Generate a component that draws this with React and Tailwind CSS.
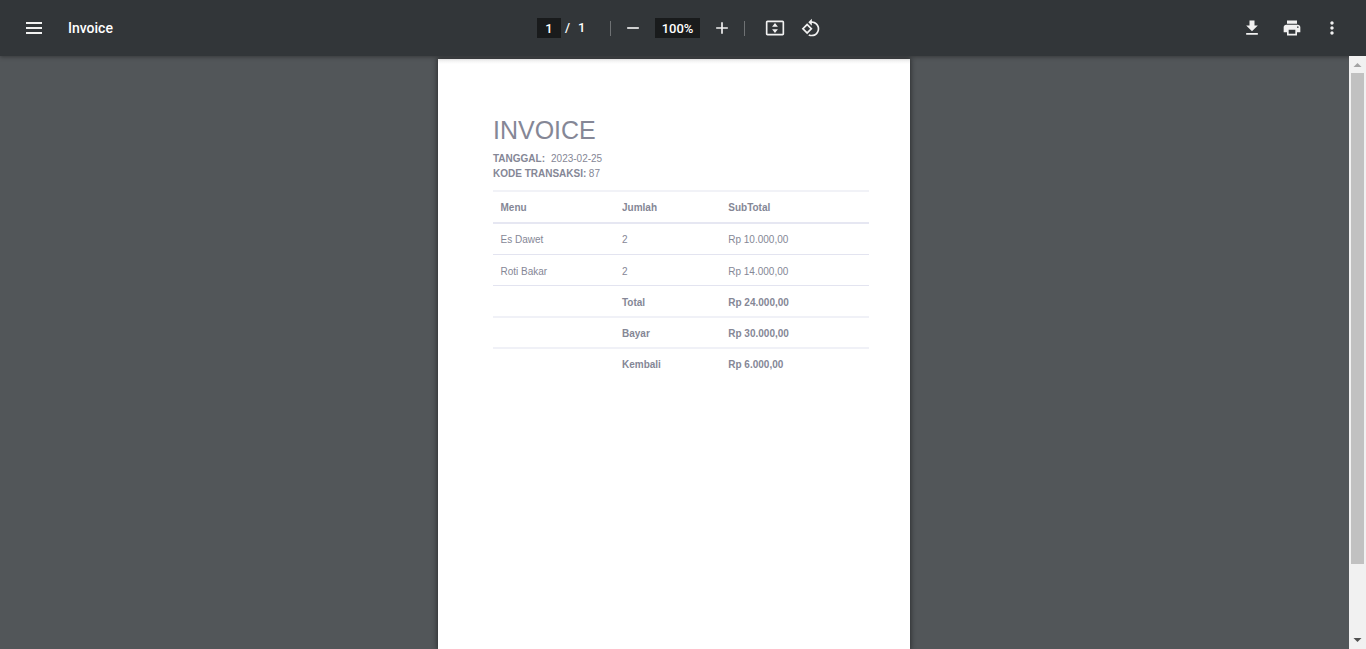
import React from 'react';

function Icon({ d, className = '' }) {
  return (
    <svg viewBox="0 0 24 24" className={`block h-5 w-5 shrink-0 fill-[#f1f1f1] ${className}`}>
      <path d={d} />
    </svg>
  );
}

const icons = {
  minus: 'M19 13H5v-2h14v2z',
  plus: 'M19 13h-6v6h-2v-6H5v-2h6V5h2v6h6v2z',
  fit: 'M21 3H3c-1.1 0-2 .9-2 2v14c0 1.1.9 2 2 2h18c1.1 0 2-.9 2-2V5c0-1.1-.9-2-2-2zm0 16.01H3V4.99h18v14.02zM12 6L8.5 10.4h7zM12 18l-3.5-4.4h7z',
  rotate:
    'M7.34 6.41L.86 12.9l6.49 6.48 6.49-6.48-6.5-6.49zM3.69 12.9l3.66-3.66L11 12.9l-3.66 3.66-3.65-3.66zm15.67-6.26C17.61 4.88 15.3 4 13 4V.76L8.76 5 13 9.24V6c1.79 0 3.58.68 4.95 2.05 2.73 2.73 2.73 7.17 0 9.9C16.58 19.32 14.79 20 13 20c-.97 0-1.94-.21-2.84-.61l-1.49 1.49C10.02 21.62 11.51 22 13 22c2.3 0 4.61-.88 6.36-2.64 3.52-3.51 3.52-9.21 0-12.72z',
  download: 'M19 9h-4V3H9v6H5l7 7 7-7zM5 18v2h14v-2H5z',
  print:
    'M19 8H5c-1.66 0-3 1.34-3 3v6h4v4h12v-4h4v-6c0-1.66-1.34-3-3-3zm-3 11H8v-5h8v5zm3-7c-.55 0-1-.45-1-1s.45-1 1-1 1 .45 1 1-.45 1-1 1zm-1-9H6v4h12V3z',
  more: 'M12 8c1.1 0 2-.9 2-2s-.9-2-2-2-2 .9-2 2 .9 2 2 2zm0 2c-1.1 0-2 .9-2 2s.9 2 2 2 2-.9 2-2-.9-2-2-2zm0 6c-1.1 0-2 .9-2 2s.9 2 2 2 2-.9 2-2-.9-2-2-2z',
};

function Toolbar() {
  return (
    <header className="relative z-10 grid h-14 shrink-0 grid-cols-[537px_1fr_124px] items-center bg-[#323639] font-[Roboto,sans-serif] text-white shadow-[0_1px_4px_rgba(0,0,0,0.35)]">
      <div className="flex items-center pl-6">
        <svg viewBox="0 0 20 20" className="block h-5 w-5 fill-[#f1f1f1]">
          <path d="M2 4h16v2H2zM2 9h16v2H2zM2 14h16v2H2z" />
        </svg>
        <span className="ml-6 text-sm leading-5 font-medium">Invoice</span>
      </div>
      <div className="flex items-center text-[13px] leading-5 font-medium">
        <span className="h-5 w-6 bg-[#191b1c] pt-px text-center">1</span>
        <span className="ml-1 w-[9px]">/</span>
        <span className="ml-1 w-[11px]">1</span>
        <span className="ml-[21px] h-[15px] w-px bg-[#6f7274]" />
        <Icon d={icons.minus} className="ml-3" />
        <span className="ml-3 h-5 w-[45px] bg-[#191b1c] pt-px text-center">100%</span>
        <Icon d={icons.plus} className="ml-3" />
        <span className="ml-3 h-[15px] w-px bg-[#6f7274]" />
        <Icon d={icons.fit} className="ml-5" />
        <Icon d={icons.rotate} className="ml-4" />
      </div>
      <div className="flex gap-5">
        <Icon d={icons.download} />
        <Icon d={icons.print} />
        <Icon d={icons.more} />
      </div>
    </header>
  );
}

const rows = [
  { cells: ['Menu', 'Jumlah', 'SubTotal'], style: 'h-[34px] font-bold border-t-2 border-t-[#f1f2f7] border-b-2 border-b-[#e6e7f2] pt-px' },
  { cells: ['Es Dawet', '2', 'Rp 10.000,00'], style: 'h-[31px] border-b border-b-[#e3e4f0]' },
  { cells: ['Roti Bakar', '2', 'Rp 14.000,00'], style: 'h-[31px] border-b border-b-[#e3e4f0] pt-[3px]' },
  { cells: ['', 'Total', 'Rp 24.000,00'], style: 'h-8 font-bold border-b-2 border-b-[#f0f1f7] pt-[3px]' },
  { cells: ['', 'Bayar', 'Rp 30.000,00'], style: 'h-[31px] font-bold border-b-2 border-b-[#f0f1f7] pt-[2px]' },
  { cells: ['', 'Kembali', 'Rp 6.000,00'], style: 'h-[31px] font-bold' },
];

function InvoicePage() {
  return (
    <article className="ml-[438px] mt-[3px] w-[472px] shrink-0 bg-white bg-linear-to-b from-[#ededed] to-white to-[5px] pl-[55px] pt-[56px] font-['Liberation_Sans',Arial,sans-serif] text-[10px] text-[#858796] shadow-[0_0_5px_1px_rgba(0,0,0,0.45)]">
      <h1 className="text-[25px] leading-[30px]">INVOICE</h1>
      <p className="mt-[6px] flex h-[15px] items-center whitespace-pre">
        <b>TANGGAL:</b>
        <span className="ml-[6px]">2023-02-25</span>
      </p>
      <p className="flex h-[15px] items-center">
        <b>KODE TRANSAKSI:</b>
        <span className="ml-[2.5px]">87</span>
      </p>
      <div className="mt-[9px] w-[376px]">
        {rows.map(({ cells, style }) => (
          <div key={cells[1] + cells[2]} className={`grid grid-cols-[121.5px_106.25px_1fr] items-center pl-[7.5px] ${style}`}>
            {cells.map((cell, i) => (
              <span key={i}>{cell}</span>
            ))}
          </div>
        ))}
      </div>
    </article>
  );
}

function Scrollbar() {
  return (
    <div className="z-20 flex w-[17px] shrink-0 flex-col items-center bg-[#f1f1f1]">
      <svg viewBox="0 0 17 17" className="h-[17px] w-[17px] shrink-0 fill-[#a3a3a3]">
        <path d="M4.5 11h8l-4-4z" />
      </svg>
      <div className="h-[491px] w-[13px] bg-[#c1c1c1]" />
      <svg viewBox="0 0 17 17" className="mt-auto h-[17px] w-[17px] shrink-0 fill-[#505050]">
        <path d="M4.5 6h8l-4 4z" />
      </svg>
    </div>
  );
}

export default function App() {
  return (
    <div className="flex h-[649px] w-[1366px] flex-col overflow-hidden bg-[#525659]">
      <Toolbar />
      <main className="flex min-h-0 flex-1">
        <div className="flex min-w-0 flex-1 overflow-hidden">
          <InvoicePage />
        </div>
        <Scrollbar />
      </main>
    </div>
  );
}
